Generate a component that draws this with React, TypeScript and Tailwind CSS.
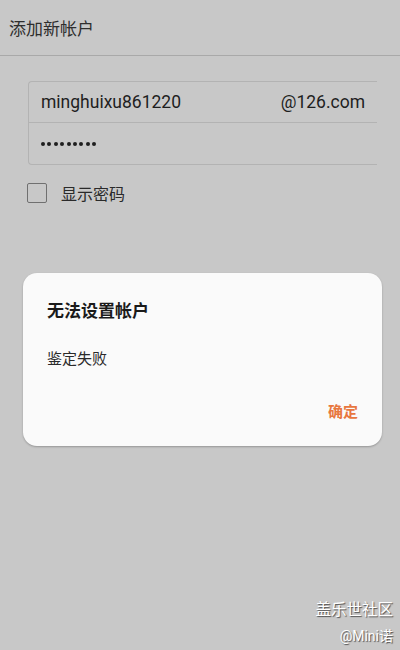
import React from "react";

export default function App() {
  const font = {
    fontFamily: "Roboto, 'Noto Sans CJK SC', sans-serif",
  };
  const dots = [0, 1, 2, 3, 4, 5, 6, 7, 8];
  return (
    <div
      className="relative w-[400px] h-[650px] bg-[#c8c8c8] overflow-hidden"
      style={font}
    >
      <div className="h-[56px] border-b border-[#a9a9a9] flex items-center pl-[9px] pt-[3px]">
        <span className="text-[17px] text-[#2e2e2e] leading-none">添加新帐户</span>
      </div>

      <div className="ml-[28px] mt-[25px] w-[349px] border-l border-y border-[#b3b3b3] rounded-l-[4px]">
        <div className="h-[41px] border-b border-[#b3b3b3] flex items-center pl-[12px] pr-[12px] pt-[1px]">
          <span className="text-[17.5px] text-[#1e1e1e] leading-none">minghuixu861220</span>
          <span className="ml-auto text-[17.5px] text-[#1e1e1e] leading-none">@126.com</span>
        </div>
        <div className="h-[41px] flex items-center pl-[12px] gap-[2.4px] pt-[1px]">
          {dots.map((d) => (
            <div key={d} className="w-[4px] h-[4px] rounded-full bg-[#1e1e1e]" />
          ))}
        </div>
      </div>

      <div className="flex items-center ml-[27px] mt-[18px]">
        <div className="w-[20px] h-[20px] border-[1.5px] border-[#707070] rounded-[2px]" />
        <span className="ml-[14px] text-[16px] text-[#2a2a2a] leading-none pt-[3px]">显示密码</span>
      </div>

      <div className="absolute left-[23px] top-[273px] w-[359px] h-[173px] bg-[#fafafa] rounded-[14px] shadow-[0_1px_2px_rgba(0,0,0,0.25)]">
        <div className="pl-[24px] pt-[30px] text-[17px] font-bold text-[#1a1a1a] leading-none">
          无法设置帐户
        </div>
        <div className="pl-[24px] pt-[32px] text-[15px] text-[#2a2a2a] leading-none">
          鉴定失败
        </div>
        <div className="flex justify-end pr-[24px] pt-[38px]">
          <span className="text-[15px] font-bold text-[#e8773f] leading-none">确定</span>
        </div>
      </div>

      <div className="absolute right-[7px] top-[603px] flex flex-col items-end text-white [text-shadow:1px_1px_1px_rgba(0,0,0,0.6)]">
        <span className="text-[15.5px] leading-none">盖乐世社区</span>
        <span className="text-[14px] leading-none mt-[10px]">@Mini诺</span>
      </div>
    </div>
  );
}
